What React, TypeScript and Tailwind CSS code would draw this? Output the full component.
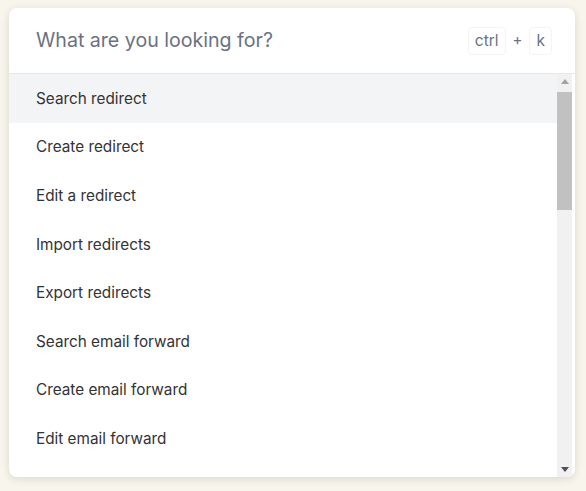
import React from 'react';

const items = [
  'Search redirect',
  'Create redirect',
  'Edit a redirect',
  'Import redirects',
  'Export redirects',
  'Search email forward',
  'Create email forward',
  'Edit email forward',
];

const Kbd: React.FC<{ children: React.ReactNode }> = ({ children }) => (
  <span className="flex h-[28px] items-center rounded border border-gray-100 px-[6px] text-[15.5px] text-gray-500">
    {children}
  </span>
);

// drawn scrollbar, the headless browser hides the native one
const ScrollBar = () => (
  <div className="mr-[3px] flex w-[15px] shrink-0 flex-col bg-[#f1f1f1]">
    <div className="flex h-[15px] items-center justify-center">
      <svg width="8" height="5" viewBox="0 0 8 5">
        <polygon points="0,5 8,5 4,0" fill="#a3a3a3" />
      </svg>
    </div>
    <div className="mt-[3px] h-[118px] bg-[#c1c1c1]" />
    <div className="flex-1" />
    <div className="flex h-[15px] items-center justify-center">
      <svg width="8" height="5" viewBox="0 0 8 5">
        <polygon points="0,0 8,0 4,5" fill="#505050" />
      </svg>
    </div>
  </div>
);

export default function App() {
  return (
    <div
      className="h-[491px] w-[586px] bg-[#f8f5ec] pl-[9px] pt-[8px]"
      style={{ fontFamily: 'Inter, "Noto Sans", sans-serif' }}
    >
      <div className="flex h-[469px] w-[566px] flex-col overflow-hidden rounded-lg bg-white shadow-[0_2px_8px_rgba(0,0,0,0.12)]">
        <div className="flex h-[66px] shrink-0 items-center justify-between border-b border-gray-200 pl-[27px] pr-[23px]">
          <span className="text-[19.6px] text-gray-500">What are you looking for?</span>
          <div className="flex items-center gap-[7px] text-gray-500">
            <Kbd>ctrl</Kbd>
            <span className="text-[15px]">+</span>
            <Kbd>k</Kbd>
          </div>
        </div>
        <div className="flex min-h-0 flex-1">
          <ul className="min-w-0 flex-1 overflow-hidden">
            {items.map((item, i) => (
              <li
                key={item}
                className={`flex h-[48.57px] items-center pl-[27px] pt-[2px] text-[15.3px] text-[#333] ${
                  i === 0 ? 'bg-gray-100' : ''
                }`}
              >
                {item}
              </li>
            ))}
          </ul>
          <ScrollBar />
        </div>
      </div>
    </div>
  );
}
